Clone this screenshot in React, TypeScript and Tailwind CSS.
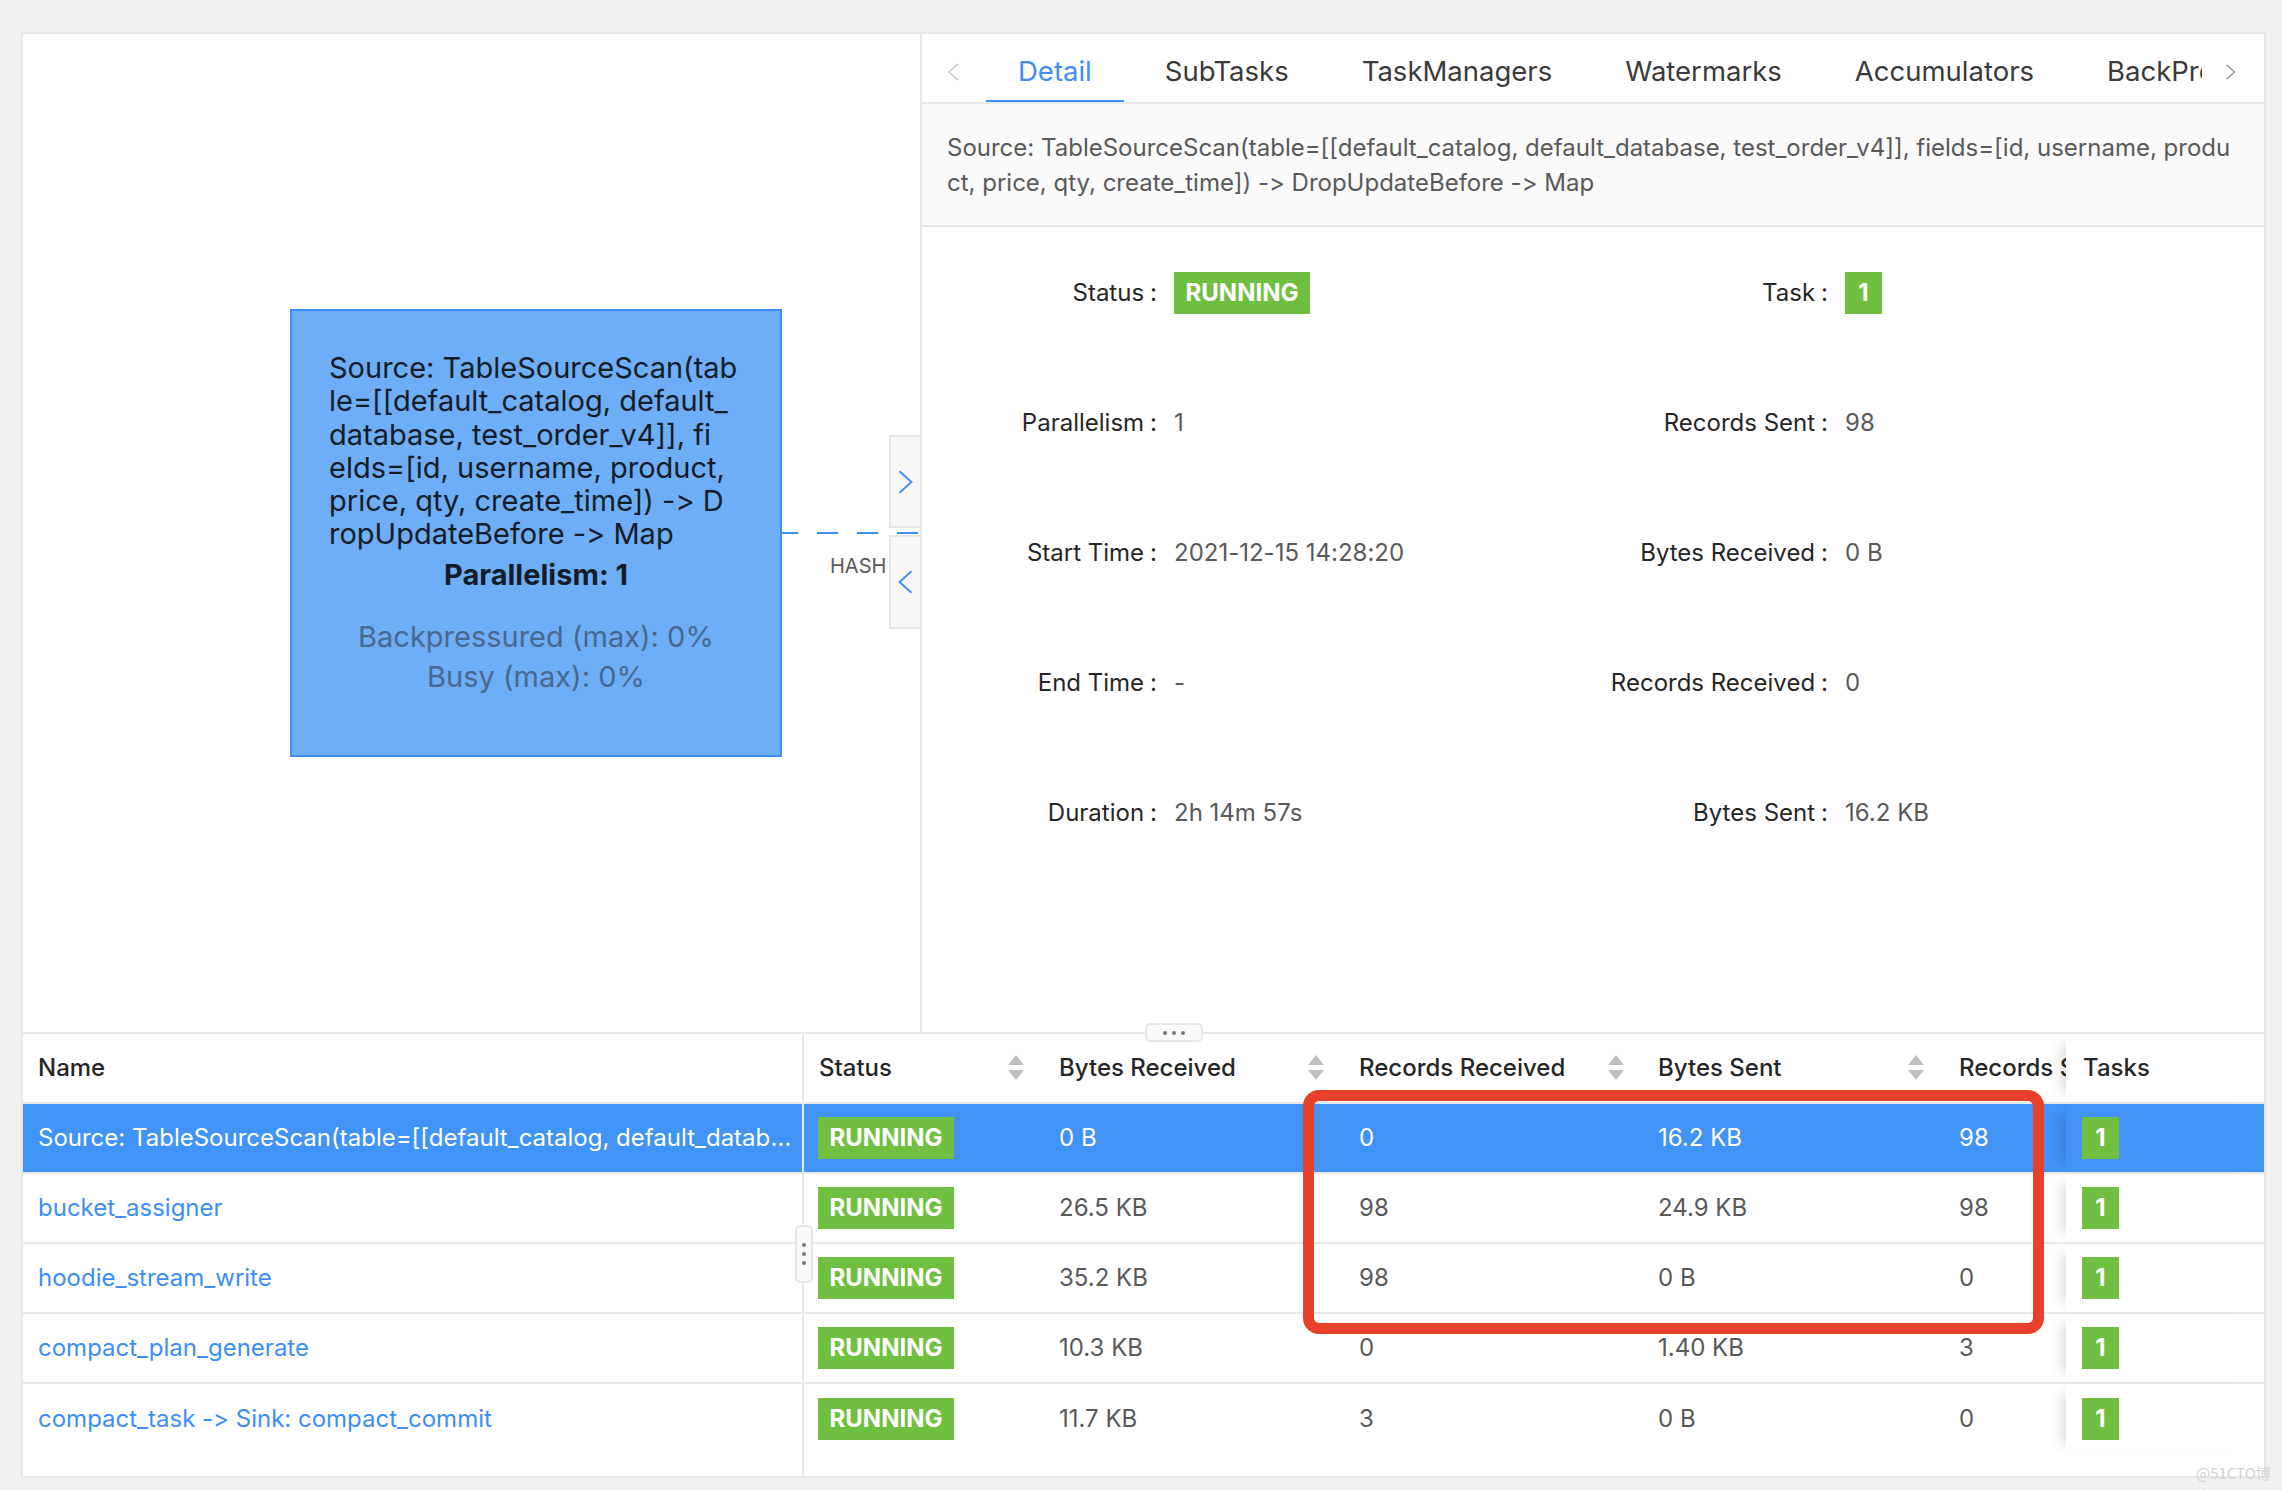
import React from 'react';

interface OperatorRow {
  name: string;
  bytesReceived: string;
  recordsReceived: string;
  bytesSent: string;
  recordsSent: string;
  selected?: boolean;
}

const rows: OperatorRow[] = [
  {
    name: 'Source: TableSourceScan(table=[[default_catalog, default_database, test_order_v4]], fields=[id, username, product, price, qty, create_time]) -> DropUpdateBefore -> Map',
    bytesReceived: '0 B',
    recordsReceived: '0',
    bytesSent: '16.2 KB',
    recordsSent: '98',
    selected: true,
  },
  { name: 'bucket_assigner', bytesReceived: '26.5 KB', recordsReceived: '98', bytesSent: '24.9 KB', recordsSent: '98' },
  { name: 'hoodie_stream_write', bytesReceived: '35.2 KB', recordsReceived: '98', bytesSent: '0 B', recordsSent: '0' },
  { name: 'compact_plan_generate', bytesReceived: '10.3 KB', recordsReceived: '0', bytesSent: '1.40 KB', recordsSent: '3' },
  { name: 'compact_task -> Sink: compact_commit', bytesReceived: '11.7 KB', recordsReceived: '3', bytesSent: '0 B', recordsSent: '0' },
];

const nodeLines = [
  'Source: TableSourceScan(tab',
  'le=[[default_catalog, default_',
  'database, test_order_v4]], fi',
  'elds=[id, username, product,',
  'price, qty, create_time]) -> D',
  'ropUpdateBefore -> Map',
];

const tabs = ['Detail', 'SubTasks', 'TaskManagers', 'Watermarks', 'Accumulators', 'BackPressure'];

const Chevron = ({ dir, className }: { dir: 'left' | 'right'; className: string }) => (
  <svg viewBox="0 0 12 20" className={className} fill="none" stroke="currentColor" strokeWidth="1.6">
    {dir === 'left' ? <polyline points="11,1 1,10 11,19" /> : <polyline points="1,1 11,10 1,19" />}
  </svg>
);

const SortIcon = () => (
  <svg viewBox="0 0 16 26" className="h-[26px] w-[16px] shrink-0 fill-[#bfbfbf]">
    <polygon points="8,0 16,10 0,10" />
    <polygon points="0,15 16,15 8,25" />
  </svg>
);

const Badge = ({ children, wide }: { children: React.ReactNode; wide?: boolean }) => (
  <span
    className={`inline-flex h-[42px] items-center justify-center bg-[#71bf41] text-[24px] font-bold text-white ${
      wide ? 'w-[136px]' : 'w-[37px]'
    }`}
  >
    {children}
  </span>
);

const GraphPanel = () => (
  <div className="relative w-[899px] shrink-0 border-r-2 border-[#e8e8e8]">
    <div className="absolute left-[267px] top-[275px] h-[448px] w-[492px] border-2 border-[#3f8ff7] bg-[#6daef6] px-[37px] pt-[40px] text-[29px] leading-[33.3px] text-[#131c27]">
      {nodeLines.map((line) => (
        <div key={line} className="whitespace-nowrap">
          {line}
        </div>
      ))}
      <div className="mt-[7px] text-center font-bold">Parallelism: 1</div>
      <div className="mt-[26px] text-center leading-[40px] text-[#47688f]">
        <div>Backpressured (max): 0%</div>
        <div>Busy (max): 0%</div>
      </div>
    </div>

    <svg className="absolute left-[759px] top-[498px] h-[2px] w-[138px]" viewBox="0 0 138 2">
      <line x1="0" y1="1" x2="138" y2="1" stroke="#3e8ef7" strokeWidth="2" strokeDasharray="21 19" strokeDashoffset="5" />
    </svg>
    <div className="absolute left-[807px] top-[520px] text-[20px] leading-[24px] text-[#595959]">HASH</div>

    <div className="absolute right-0 top-[401px] flex h-[93px] w-[31px] items-center justify-center border-2 border-r-0 border-[#e6e6e6] bg-[#f7f7f7] text-[#3e8ef7]">
      <Chevron dir="right" className="h-[24px] w-[15px]" />
    </div>
    <div className="absolute right-0 top-[501px] flex h-[94px] w-[31px] items-center justify-center border-2 border-r-0 border-[#e6e6e6] bg-[#f7f7f7] text-[#3e8ef7]">
      <Chevron dir="left" className="h-[24px] w-[15px]" />
    </div>
  </div>
);

const DetailItem = ({ label, children }: { label: string; children: React.ReactNode }) => (
  <div className="flex items-center">
    <div className="w-[235px] shrink-0 text-right text-[24px] text-[#262626]">
      {label}
      <span className="ml-[6px]">:</span>
    </div>
    <div className="ml-[17px] text-[24px] text-[#595959]">{children}</div>
  </div>
);

const DetailPanel = () => (
  <div className="flex min-w-0 flex-1 flex-col">
    <div className="flex h-[70px] shrink-0 border-b-2 border-[#e8e8e8]">
      <div className="flex w-[64px] shrink-0 items-center pl-[26px] pt-[8px] text-[#c4c4c4]">
        <Chevron dir="left" className="h-[18px] w-[11px]" />
      </div>
      <div className="flex min-w-0 flex-1 overflow-hidden">
        {tabs.map((tab, i) => (
          <div
            key={tab}
            className={`relative mr-[9px] flex shrink-0 items-center px-[32px] pt-[8px] text-[27.5px] ${
              i === 0 ? 'text-[#3e8ef7]' : 'text-[#3a3a3a]'
            }`}
          >
            {tab}
            {i === 0 && <div className="absolute -bottom-[2px] left-0 right-0 h-[4px] bg-[#3e8ef7]" />}
          </div>
        ))}
      </div>
      <div className="flex w-[62px] shrink-0 items-center pl-[23px] pt-[8px] text-[#8c8c8c]">
        <Chevron dir="right" className="h-[16px] w-[11px]" />
      </div>
    </div>

    <div className="border-b-2 border-[#e8e8e8] bg-[#fafafa] px-[25px] pb-[25px] pt-[26px] text-[24px] leading-[35px] text-[#595959]">
      <div className="whitespace-nowrap">
        Source: TableSourceScan(table=[[default_catalog, default_database, test_order_v4]], fields=[id, username, produ
      </div>
      <div className="whitespace-nowrap">ct, price, qty, create_time]) -&gt; DropUpdateBefore -&gt; Map</div>
    </div>

    <div className="grid grid-cols-2 pt-[1px] [grid-auto-rows:130px]">
      <DetailItem label="Status">
        <Badge wide>RUNNING</Badge>
      </DetailItem>
      <DetailItem label="Task">
        <Badge>1</Badge>
      </DetailItem>
      <DetailItem label="Parallelism">1</DetailItem>
      <DetailItem label="Records Sent">98</DetailItem>
      <DetailItem label="Start Time">2021-12-15 14:28:20</DetailItem>
      <DetailItem label="Bytes Received">0 B</DetailItem>
      <DetailItem label="End Time">-</DetailItem>
      <DetailItem label="Records Received">0</DetailItem>
      <DetailItem label="Duration">2h 14m 57s</DetailItem>
      <DetailItem label="Bytes Sent">16.2 KB</DetailItem>
    </div>
  </div>
);

const fixedShadow = 'shadow-[-14px_0_12px_-10px_rgba(0,0,0,0.14)]';

const OperatorTable = () => (
  <div className="flex flex-1 flex-col text-[24px]">
    <div className="flex h-[70px] shrink-0 border-b-2 border-[#e8e8e8] font-medium text-[#262626]">
      <div className="flex w-[781px] shrink-0 items-center border-r-2 border-[#e8e8e8] pl-[15px]">Name</div>
      <div className="flex w-[239px] shrink-0 items-center justify-between pl-[15px] pr-[19px]">
        Status
        <SortIcon />
      </div>
      <div className="flex w-[300px] shrink-0 items-center justify-between pl-[16px] pr-[19px]">
        Bytes Received
        <SortIcon />
      </div>
      <div className="flex w-[300px] shrink-0 items-center justify-between pl-[16px] pr-[19px]">
        Records Received
        <SortIcon />
      </div>
      <div className="flex w-[300px] shrink-0 items-center justify-between pl-[15px] pr-[19px]">
        Bytes Sent
        <SortIcon />
      </div>
      <div className="flex w-[123px] shrink-0 items-center overflow-hidden whitespace-nowrap pl-[16px]">Records Sent</div>
      <div className={`relative flex flex-1 items-center bg-white pl-[17px] ${fixedShadow}`}>Tasks</div>
    </div>

    {rows.map((row, i) => (
      <div
        key={row.name}
        className={`flex h-[70px] shrink-0 ${i < rows.length - 1 ? 'border-b-2 border-[#e8e8e8]' : ''} ${
          row.selected ? 'bg-[#4193f6] text-white' : 'text-[#595959]'
        }`}
      >
        <div
          className={`flex w-[781px] min-w-0 shrink-0 items-center border-r-2 border-[#e8e8e8] pl-[15px] pr-[10px] ${
            row.selected ? '' : 'text-[#3e8ef7]'
          }`}
        >
          <span className="truncate">{row.name}</span>
        </div>
        <div className="flex w-[239px] shrink-0 items-center pl-[14px]">
          <Badge wide>RUNNING</Badge>
        </div>
        <div className="flex w-[300px] shrink-0 items-center pl-[16px]">{row.bytesReceived}</div>
        <div className="flex w-[300px] shrink-0 items-center pl-[16px]">{row.recordsReceived}</div>
        <div className="flex w-[300px] shrink-0 items-center pl-[15px]">{row.bytesSent}</div>
        <div className="flex w-[123px] shrink-0 items-center pl-[16px]">{row.recordsSent}</div>
        <div
          className={`relative flex flex-1 items-center pl-[16px] ${row.selected ? 'bg-[#4193f6]' : 'bg-white'} ${fixedShadow}`}
        >
          <Badge>1</Badge>
        </div>
      </div>
    ))}

    <div className="flex flex-1">
      <div className="w-[781px] border-r-2 border-[#e8e8e8]" />
    </div>
  </div>
);

export default function App() {
  return (
    <div className="relative h-[1490px] w-[2282px] overflow-hidden bg-[#f1f1f1] pl-[21px] pt-[32px] font-[Inter,'Liberation_Sans',sans-serif] [font-variant-ligatures:no-contextual] [font-feature-settings:'calt'_0]">
      <div className="relative flex h-[1446px] w-[2245px] flex-col border-2 border-[#e8e8e8] bg-white">
        <div className="flex h-[1000px] shrink-0 border-b-2 border-[#e8e8e8]">
          <GraphPanel />
          <DetailPanel />
        </div>
        <OperatorTable />

        {/* resize handles */}
        <div className="absolute left-[1122px] top-[989px] flex h-[19px] w-[58px] items-center justify-center gap-[5px] rounded-[5px] border-2 border-[#e6e6e6] bg-[#fafafa]">
          <span className="h-[4px] w-[4px] rounded-full bg-[#777]" />
          <span className="h-[4px] w-[4px] rounded-full bg-[#777]" />
          <span className="h-[4px] w-[4px] rounded-full bg-[#777]" />
        </div>
        <div className="absolute left-[772px] top-[1191px] flex h-[58px] w-[18px] flex-col items-center justify-center gap-[5px] rounded-[5px] border-2 border-[#e6e6e6] bg-[#fafafa]">
          <span className="h-[4px] w-[4px] rounded-full bg-[#777]" />
          <span className="h-[4px] w-[4px] rounded-full bg-[#777]" />
          <span className="h-[4px] w-[4px] rounded-full bg-[#777]" />
        </div>

        {/* annotation */}
        <div className="absolute left-[1280px] top-[1056px] h-[244px] w-[741px] rounded-[16px] border-[11px] border-[#e8412b]" />
      </div>
      <div className="absolute left-[2196px] top-[1462px] text-[15px] text-[#d4d4d4] font-['Noto_Sans_CJK_SC',sans-serif]">
        @51CTO博客
      </div>
    </div>
  );
}
